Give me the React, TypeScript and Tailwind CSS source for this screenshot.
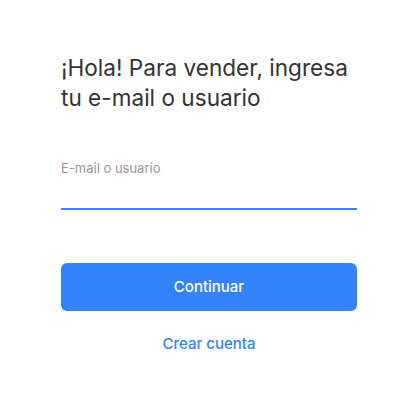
export default function App() {
  return (
    <div className="min-h-screen bg-white font-['Inter','Liberation_Sans',sans-serif]">
      <div className="w-[296px] ml-[61px] pt-[53px]">
        {/* Heading */}
        <h1 className="text-[22.6px] leading-[30px] text-[#333333] font-normal">
          ¡Hola! Para vender, ingresa tu e-mail o usuario
        </h1>

        {/* Input */}
        <div className="mt-[47px]">
          <label className="block text-[13px] leading-[16px] text-[#999999]">
            E-mail o usuario
          </label>
          <input
            type="text"
            className="block w-full h-[27px] mt-[7px] outline-none border-0 border-b-2 border-[#3483fa] bg-transparent text-[16px] text-[#333333]"
          />
        </div>

        {/* Actions */}
        <button className="mt-[53px] w-full h-[48px] rounded-[6px] bg-[#3483fa] text-white text-[15px] font-medium">
          Continuar
        </button>
        <div className="mt-[20px] text-center">
          <a className="text-[15px] font-medium text-[#3483fa]" href="#">
            Crear cuenta
          </a>
        </div>
      </div>
    </div>
  );
}
